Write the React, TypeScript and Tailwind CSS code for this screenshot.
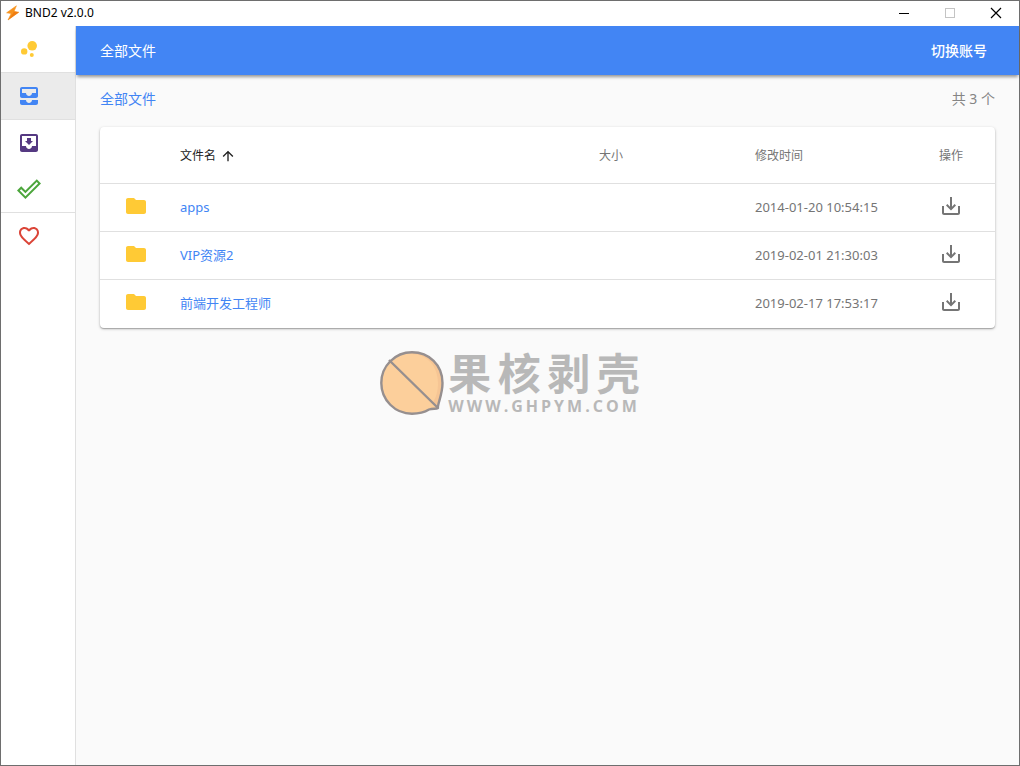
import type { ReactNode } from "react";
import {
  MdAllInbox,
  MdArrowUpward,
  MdBubbleChart,
  MdDoneOutline,
  MdFavoriteBorder,
  MdFolder,
  MdMoveToInbox,
  MdSaveAlt,
} from "react-icons/md";

type FileRow = { name: string; modified: string };

const files: FileRow[] = [
  { name: "apps", modified: "2014-01-20 10:54:15" },
  { name: "VIP资源2", modified: "2019-02-01 21:30:03" },
  { name: "前端开发工程师", modified: "2019-02-17 17:53:17" },
];

function TitleBar() {
  return (
    <header className="flex h-[25px] items-center bg-white pb-px">
      <svg className="ml-1 size-4 shrink-0" viewBox="0 0 16 16" aria-hidden="true">
        <path d="M11.4 0.8 L1.6 7.8 L6.2 8.6 L3 15 L13.8 7.2 L9 6.4 Z" fill="#f7931e" stroke="#f7931e" strokeWidth="0.6" strokeLinejoin="round" />
        <path d="M9 6.4 L13.8 7.2 L3 15 L8 8.6 Z" fill="#ef7d12" />
      </svg>
      <h1 className="ml-1 flex-1 text-xs text-black">BND2 v2.0.0</h1>
      <div className="flex h-full">
        <WindowButton label="最小化">
          <path d="M1 6.5h10" stroke="#000" />
        </WindowButton>
        <WindowButton label="最大化" disabled>
          <rect x="1.5" y="1.5" width="9" height="9" stroke="#c4c4c4" />
        </WindowButton>
        <WindowButton label="关闭">
          <path d="M1 1l10 10M11 1L1 11" stroke="#000" strokeWidth="1.2" />
        </WindowButton>
      </div>
    </header>
  );
}

function WindowButton({ label, disabled, children }: { label: string; disabled?: boolean; children: ReactNode }) {
  return (
    <button type="button" aria-label={label} disabled={disabled} className="flex w-[46px] items-center justify-center">
      <svg className="size-3" viewBox="0 0 12 12" fill="none" aria-hidden="true">
        {children}
      </svg>
    </button>
  );
}

function NavItem({
  label,
  active,
  divider,
  children,
}: {
  label: string;
  active?: boolean;
  divider?: boolean;
  children: ReactNode;
}) {
  return (
    <li className={divider ? "border-b border-[#e0e0e0]" : ""}>
      <a
        href="#"
        aria-label={label}
        aria-current={active ? "page" : undefined}
        className={active ? "flex h-[46px] items-center bg-[#ebebeb] pl-4" : "flex h-[46px] items-center pl-4"}
      >
        {children}
      </a>
    </li>
  );
}

function Sidebar() {
  return (
    <nav className="w-[75px] shrink-0 border-r border-[#e0e0e0] bg-white">
      <ul>
        <NavItem label="首页" divider>
          <MdBubbleChart className="size-6 text-[#ffca35]" />
        </NavItem>
        <NavItem label="全部文件" active divider>
          <MdAllInbox className="size-6 text-[#4285f4]" />
        </NavItem>
        <NavItem label="下载中">
          <MdMoveToInbox className="size-6 text-[#553982]" />
        </NavItem>
        <NavItem label="已完成" divider>
          <MdDoneOutline className="size-6 text-[#4ca63c]" />
        </NavItem>
        <NavItem label="收藏">
          <MdFavoriteBorder className="size-6 text-[#db4437]" />
        </NavItem>
      </ul>
    </nav>
  );
}

function FileTable() {
  return (
    <div className="overflow-hidden rounded bg-white shadow-[0_1px_3px_rgba(0,0,0,0.25),0_1px_1px_rgba(0,0,0,0.2)]">
      <table className="w-full table-fixed border-separate border-spacing-0 text-left">
        <colgroup>
          <col className="w-14" />
          <col />
          <col className="w-[156px]" />
          <col className="w-[176px]" />
          <col className="w-[88px]" />
        </colgroup>
        <thead>
          <tr className="h-[57px] text-xs text-[#757575] *:border-b *:border-[#e0e0e0] *:pt-0.5">
            <th aria-label="类型" />
            <th aria-sort="ascending" className="px-6 font-normal text-[#212121]">
              <button type="button" className="flex items-center gap-1">
                文件名
                <MdArrowUpward className="size-4" />
              </button>
            </th>
            <th className="px-6 font-normal">大小</th>
            <th className="px-6 font-normal">修改时间</th>
            <th className="text-center font-normal">操作</th>
          </tr>
        </thead>
        <tbody>
          {files.map((file) => (
            <tr
              key={file.name}
              className="h-12 text-[13px] *:border-b *:border-[#e0e0e0] last:*:border-b-0"
            >
              <td className="pl-6">
                <MdFolder className="mb-1 size-6 text-[#ffca35]" />
              </td>
              <td className="px-6">
                <a href="#" className="text-[#4285f4]">
                  {file.name}
                </a>
              </td>
              <td />
              <td className="px-6 whitespace-nowrap text-[#757575]">{file.modified}</td>
              <td>
                <button type="button" aria-label={`下载 ${file.name}`} className="mx-auto mb-1 block">
                  <MdSaveAlt className="size-6 text-[#757575]" />
                </button>
              </td>
            </tr>
          ))}
        </tbody>
      </table>
    </div>
  );
}

function Watermark() {
  return (
    <div className="pointer-events-none absolute inset-0 flex items-center justify-center gap-1">
      <svg className="size-16" viewBox="0 0 64 64" fill="none" aria-hidden="true">
        <path
          d="M58 57 C57 54 62.5 44 62.5 32 C62.5 14 49 1.3 32 1.3 C15 1.3 1.3 15 1.3 32 C1.3 49 15 62.7 32 62.7 C39 62.7 45 61 49 58.5 C53 57 56 58.5 58 57 Z"
          fill="#fccf9b"
        />
        <path
          d="M31 3 C48 3 58 16 58 32 C58 40 56 48 52 52 L57 55 C59 50 62.5 42 62.5 32 C62.5 14 49 1.3 32 1.3 Z"
          fill="#f6c594"
        />
        <path
          d="M58 57 C57 54 62.5 44 62.5 32 C62.5 14 49 1.3 32 1.3 C15 1.3 1.3 15 1.3 32 C1.3 49 15 62.7 32 62.7 C39 62.7 45 61 49 58.5 C53 57 56 58.5 58 57 Z M9 9 L57 56"
          stroke="#968f8f"
          strokeWidth="2.4"
          strokeLinejoin="round"
        />
      </svg>
      <div className="text-[#b8b8b8]">
        <p className="flex justify-between font-['Noto_Sans_CJK_SC',sans-serif] text-[43px] leading-[46px] font-bold">
          <span>果</span>
          <span>核</span>
          <span>剥</span>
          <span>壳</span>
        </p>
        <p className="font-['Open_Sans',sans-serif] text-base leading-6 font-bold tracking-[3px]">
          WWW.GHPYM.COM
        </p>
      </div>
    </div>
  );
}

export default function App() {
  return (
    <div className="relative flex min-h-screen flex-col border border-[#6e6e6e] bg-[#fafafa] font-['Noto_Sans','Noto_Sans_CJK_SC',sans-serif]">
      <TitleBar />
      <div className="flex flex-1">
        <Sidebar />
        <div className="min-w-0 flex-1">
          <div className="flex h-[49px] items-center justify-between bg-[#4285f4] pr-8 pl-6 text-sm text-white shadow-[0_3px_3px_-1px_rgba(0,0,0,0.4)]">
            <h2>全部文件</h2>
            <button type="button" className="font-medium">
              切换账号
            </button>
          </div>
          <main className="px-6">
            <div className="flex h-[52px] items-center justify-between pb-1 text-sm">
              <a href="#" className="text-[#4285f4]">
                全部文件
              </a>
              <span className="text-[#858585]">共 3 个</span>
            </div>
            <FileTable />
          </main>
        </div>
      </div>
      <Watermark />
    </div>
  );
}
